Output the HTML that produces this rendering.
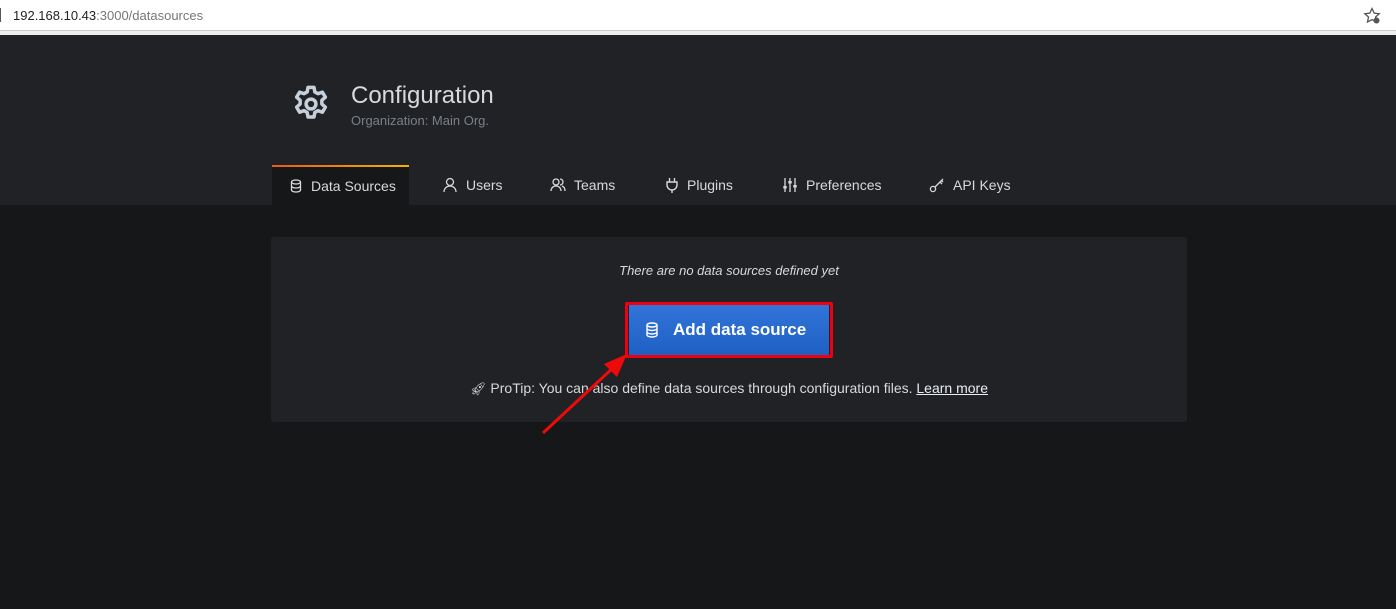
<!DOCTYPE html>
<html><head><style>
*{margin:0;padding:0;box-sizing:border-box}
body{width:1396px;height:609px;background:#161719;font-family:"Liberation Sans",sans-serif;position:relative;overflow:hidden}
.bar{position:absolute;left:0;top:0;width:1396px;height:31px;background:#fff;border-bottom:1px solid #ccc}
.bar .t{position:absolute;left:13px;top:8px;font-size:13px;color:#222}
.bar .t span{color:#777}
.bar .cur{position:absolute;left:0;top:8px;width:1px;height:14px;background:#555}
.sep{position:absolute;left:0;top:31px;width:1396px;height:4px;background:#eee}
.hdr{position:absolute;left:0;top:35px;width:1396px;height:170px;background:#202226}
.title{position:absolute;left:351px;top:82px;font-size:24px;color:#d8d9da}
.sub{position:absolute;left:351px;top:113px;font-size:13px;color:#7b8087}
.tab{position:absolute;top:165px;height:40px;font-size:14px;color:#d8d9da;display:flex;align-items:center;gap:8px}
.tab.act{left:272px;width:137px;background:#161719;padding-left:17px;border-top:2px solid;border-image:linear-gradient(90deg,#eb5a1f,#f4b400) 1}
.panel{position:absolute;left:271px;top:237px;width:916px;height:185px;background:#202226;border-radius:3px}
.empty{position:absolute;left:271px;width:916px;top:263px;text-align:center;font-style:italic;font-size:13px;color:#d8d9da}
.red{position:absolute;left:625px;top:302px;width:208px;height:56px;border:3px solid #f0000f;border-radius:2px}
.btn{position:absolute;left:629px;top:305px;width:200px;height:50px;background:linear-gradient(#3274d9,#1f60c4);color:#fff;font-weight:bold;font-size:17px;display:flex;align-items:center;padding-left:16px;gap:14px}
.tip{position:absolute;left:271px;width:916px;top:380px;text-align:center;font-size:14px;color:#d8d9da}
.tip u{color:#e9edf2}
svg{display:block}
</style></head><body>
<div class="bar"><div class="cur"></div><div class="t">192.168.10.43<span>:3000/datasources</span></div>
<svg style="position:absolute;left:1363px;top:7px" width="18" height="18" viewBox="0 0 18 18"><path d="M9 1.5l2.2 4.6 5 .6-3.7 3.4 1 5L9 12.6 4.5 15l1-5L1.8 6.7l5-.6z" fill="none" stroke="#555" stroke-width="1.3"/><circle cx="13.5" cy="13.5" r="3" fill="#555"/></svg></div>
<div class="sep"></div>
<div class="hdr"></div>
<svg style="position:absolute;left:290px;top:83px" width="42" height="42" viewBox="0 0 24 24"><path fill="none" stroke="#c7d0d9" stroke-width="2" stroke-linejoin="round" d="M10.3 2.5h3.4l.5 2.6 1.8 1 2.5-.9 1.7 2.9-2 1.8v2.1l2 1.8-1.7 2.9-2.5-.9-1.8 1-.5 2.6h-3.4l-.5-2.6-1.8-1-2.5.9-1.7-2.9 2-1.8v-2.1l-2-1.8 1.7-2.9 2.5.9 1.8-1z"/><circle cx="12" cy="12" r="2.8" fill="none" stroke="#c7d0d9" stroke-width="2"/></svg>
<div class="title">Configuration</div>
<div class="sub">Organization: Main Org.</div>
<div class="tab act"><svg width="14" height="14" viewBox="0 0 14 14"><ellipse cx="7" cy="3" rx="4.5" ry="2" fill="none" stroke="#d8d9da" stroke-width="1.3"/><path d="M2.5 3v8c0 1.1 2 2 4.5 2s4.5-.9 4.5-2V3M2.5 7c0 1.1 2 2 4.5 2s4.5-.9 4.5-2" fill="none" stroke="#d8d9da" stroke-width="1.3"/></svg>Data Sources</div>
<div class="tab" style="left:442px"><svg width="16" height="16" viewBox="0 0 16 16"><circle cx="8" cy="5" r="3.5" fill="none" stroke="#d8d9da" stroke-width="1.3"/><path d="M2 15c0-3.5 2.7-6 6-6s6 2.5 6 6" fill="none" stroke="#d8d9da" stroke-width="1.3"/></svg>Users</div>
<div class="tab" style="left:550px"><svg width="16" height="16" viewBox="0 0 16 16"><circle cx="6" cy="5" r="3" fill="none" stroke="#d8d9da" stroke-width="1.3"/><path d="M1 14c0-3 2.2-5 5-5s5 2 5 5M10 2a3 3 0 010 6M12 9c2 .7 3 2.5 3 5" fill="none" stroke="#d8d9da" stroke-width="1.3"/></svg>Teams</div>
<div class="tab" style="left:665px"><svg width="14" height="16" viewBox="0 0 14 16"><path d="M4.5 1v4M9.5 1v4M2 5h10v3a5 5 0 01-10 0zM7 13v3" fill="none" stroke="#d8d9da" stroke-width="1.4"/></svg>Plugins</div>
<div class="tab" style="left:782px"><svg width="16" height="16" viewBox="0 0 16 16"><path d="M3 1v14M8 1v14M13 1v14" stroke="#d8d9da" stroke-width="1.3"/><rect x="1.3" y="9" width="3.4" height="2.5" fill="#d8d9da"/><rect x="6.3" y="4" width="3.4" height="2.5" fill="#d8d9da"/><rect x="11.3" y="8" width="3.4" height="2.5" fill="#d8d9da"/></svg>Preferences</div>
<div class="tab" style="left:929px"><svg width="16" height="16" viewBox="0 0 16 16"><circle cx="4" cy="12" r="2.6" fill="none" stroke="#d8d9da" stroke-width="1.3"/><path d="M6 10l8-8M11 5l2 2M12.5 3.5l1.5 1.5" stroke="#d8d9da" stroke-width="1.3"/></svg>API Keys</div>
<div class="panel"></div>
<div class="empty">There are no data sources defined yet</div>
<div class="red"></div>
<div class="btn"><svg width="14" height="16" viewBox="0 0 14 16"><ellipse cx="7" cy="3" rx="5" ry="2" fill="none" stroke="#fff" stroke-width="1.4"/><path d="M2 3v10c0 1.1 2.2 2 5 2s5-.9 5-2V3M2 6.5c0 1.1 2.2 2 5 2s5-.9 5-2M2 10c0 1.1 2.2 2 5 2s5-.9 5-2" fill="none" stroke="#fff" stroke-width="1.4"/></svg>Add data source</div>
<div class="tip"><span style="font-size:13px">🚀︎</span> ProTip: You can also define data sources through configuration files. <u>Learn more</u></div>
<svg style="position:absolute;left:0;top:0" width="1396" height="609"><path d="M543 433L615 366" stroke="#ee0a0a" stroke-width="3"/><path d="M627 354L604 364 617 377z" fill="#ee0a0a"/></svg>
</body></html>
